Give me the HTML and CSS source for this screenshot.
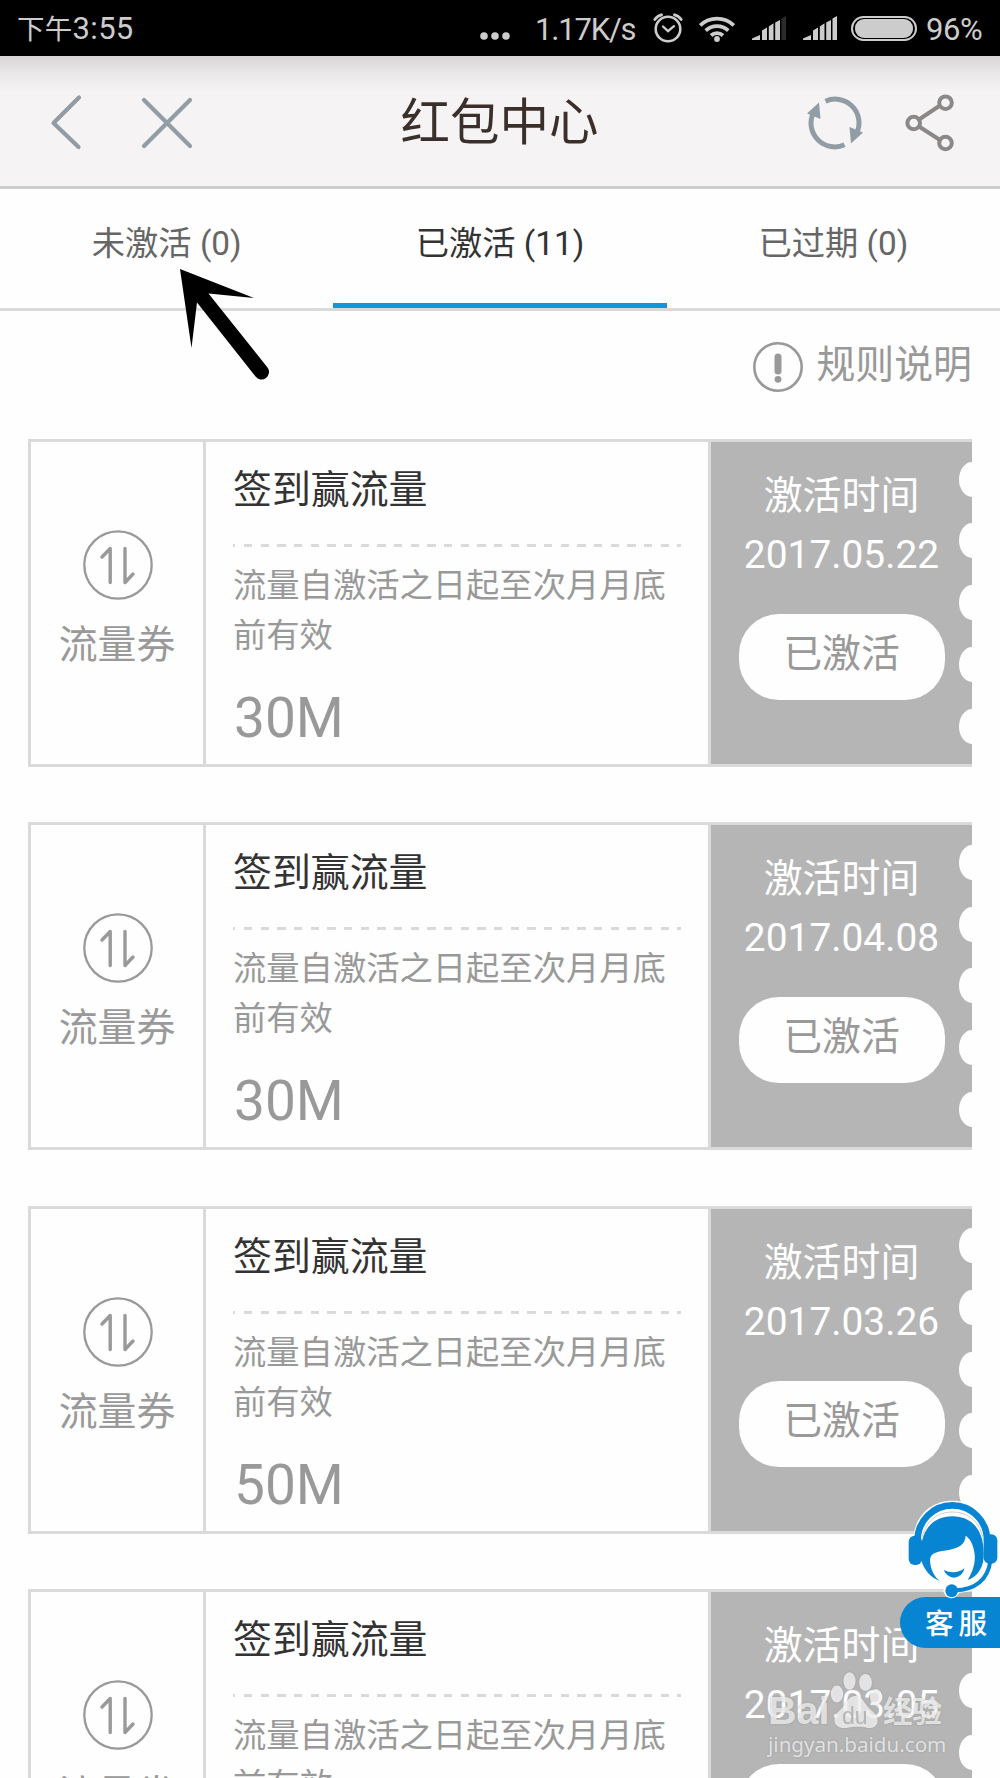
FILE: index.html
```html
<!DOCTYPE html>
<html lang="zh-CN">
<head>
<meta charset="utf-8">
<title>红包中心</title>
<link rel="stylesheet" href="styles.css">
</head>
<body>
<svg class="defs" width="0" height="0" aria-hidden="true">
  <symbol id="flow" viewBox="0 0 70 70">
    <g fill="none" stroke="#999" stroke-linecap="round" stroke-linejoin="round">
      <circle cx="35" cy="35" r="33.7" stroke-width="2.3"/>
      <path d="M19 27 27.2 18.5V52.5M42 18.5V52.5L50 44" stroke-width="3.4"/>
    </g>
  </symbol>
  <symbol id="signal" viewBox="0 0 34 24">
    <path d="M0 24V22.6L8 19v5zM10 24V14.5l5-3V24zM16.800 24V10.500l4.700-3.200V24zM23.200 24V6.500L28 4V24z"/>
  </symbol>
</svg>

<div class="status">
  <div class="clock"><span class="ampm">下午</span>3:55</div>
  <div class="indicators">
    <svg class="dots" width="30" height="24" viewBox="0 0 30 24"><circle cx="4" cy="20" r="3.8"/><circle cx="15" cy="20" r="3.8"/><circle cx="26" cy="20" r="3.8"/></svg>
    <span class="speed">1.17K/s</span>
    <svg class="alarm" width="30" height="30" viewBox="0 0 30 30"><g fill="none" stroke="#ccc" stroke-linecap="round"><circle cx="15" cy="16" r="12.300" stroke-width="2.600"/><path d="m10 13.500 5 4.700 6-5" stroke-width="2.400"/><path d="M1.800 6.500Q4 3 8.500 1.800M28.200 6.500Q26 3 21.500 1.800" stroke-width="2.800"/></g></svg>
    <svg class="wifi" width="36" height="27" viewBox="0 0 36 27"><g fill="none" stroke="#ccc" stroke-width="3.800"><path d="M1.200 10.500a24 24 0 0 1 33.600 0"/><path d="M6.700 15.600a16.500 16.500 0 0 1 22.600 0"/><path d="M12 20.500a9 9 0 0 1 12 0"/></g><circle cx="18" cy="24" r="2.900"/></svg>
    <svg class="sig1" width="34" height="24"><use href="#signal"/><path d="M29.500 24V2.500L34 0V24z" fill="#2c2c2c"/></svg>
    <svg class="sig2" width="34" height="24"><use href="#signal"/><path d="M29.500 24V2.500L34 0V24z"/></svg>
    <div class="battery"><div class="charge"></div></div>
    <span class="percent">96%</span>
  </div>
</div>

<header class="bar">
  <div class="side">
    <svg width="34" height="58" viewBox="0 0 34 58"><path d="M30 3.500 4.500 29 29.500 53" fill="none" stroke="#919ca5" stroke-width="4.200" stroke-linecap="round" stroke-linejoin="round"/></svg>
    <svg class="close" width="52" height="52" viewBox="0 0 52 52"><path d="m3 3 46 46M49 3 3 49" fill="none" stroke="#919ca5" stroke-width="4.200" stroke-linecap="round"/></svg>
  </div>
  <h1>红包中心</h1>
  <div class="side right">
    <svg width="56" height="54" viewBox="-28 -27 56 54"><g id="half"><path d="M-9.500-21.800A23.800 23.800 0 0 1 22.600 8" fill="none" stroke="#919ca5" stroke-width="5"/><path d="M14.500 4 28 9.500 16 20.500z" fill="#919ca5"/></g><use href="#half" transform="rotate(180)"/></svg>
    <svg class="share" width="50" height="60" viewBox="0 0 50 60"><g fill="none" stroke="#8b8887" stroke-width="4"><path d="M14 26.500 35 12.500M14 33.500l21 13.500"/><circle cx="8.700" cy="30" r="6.300"/><circle cx="40.500" cy="9.700" r="6.300"/><circle cx="40.500" cy="50" r="6.300"/></g></svg>
  </div>
</header>

<nav class="tabs">
  <div class="tab">未激活 (0)</div>
  <div class="tab active">已激活 (11)</div>
  <div class="tab">已过期 (0)</div>
</nav>

<div class="rules">
  <svg width="50" height="50" viewBox="0 0 50 50"><circle cx="25" cy="25" r="23.700" fill="none" stroke="#999" stroke-width="2.600"/><path d="M25 15v14" stroke="#999" stroke-width="7" stroke-linecap="round"/><circle cx="25" cy="37.300" r="3.400" fill="#999"/></svg>
  <span>规则说明</span>
</div>

<main class="list">
  <article class="card">
    <div class="kind"><svg width="70" height="70"><use href="#flow"/></svg><span>流量券</span></div>
    <div class="info"><h2>签到赢流量</h2><div class="dash"></div><p>流量自激活之日起至次月月底前有效</p><strong>30M</strong></div>
    <div class="stub"><span>激活时间</span><span>2017.05.22</span><div class="pill">已激活</div><div class="teeth"><i></i><i></i><i></i><i></i><i></i></div></div>
  </article>
  <article class="card">
    <div class="kind"><svg width="70" height="70"><use href="#flow"/></svg><span>流量券</span></div>
    <div class="info"><h2>签到赢流量</h2><div class="dash"></div><p>流量自激活之日起至次月月底前有效</p><strong>30M</strong></div>
    <div class="stub"><span>激活时间</span><span>2017.04.08</span><div class="pill">已激活</div><div class="teeth"><i></i><i></i><i></i><i></i><i></i></div></div>
  </article>
  <article class="card">
    <div class="kind"><svg width="70" height="70"><use href="#flow"/></svg><span>流量券</span></div>
    <div class="info"><h2>签到赢流量</h2><div class="dash"></div><p>流量自激活之日起至次月月底前有效</p><strong>50M</strong></div>
    <div class="stub"><span>激活时间</span><span>2017.03.26</span><div class="pill">已激活</div><div class="teeth"><i></i><i></i><i></i><i></i><i></i></div></div>
  </article>
  <article class="card">
    <div class="kind"><svg width="70" height="70"><use href="#flow"/></svg><span>流量券</span></div>
    <div class="info"><h2>签到赢流量</h2><div class="dash"></div><p>流量自激活之日起至次月月底前有效</p></div>
    <div class="stub"><span>激活时间</span><span>2017.03.05</span><div class="pill"></div><div class="teeth"><i></i><i></i><i></i><i></i><i></i></div></div>
  </article>
</main>

<svg class="pointer" width="92" height="112" viewBox="0 0 92 112"><path d="M1 0 75 29 29.500 24.500 88.500 98.500A7 7 0 0 1 76.500 107.500L18 33.500 12.500 79z"/></svg>

<div class="service">
  <svg width="95" height="100" viewBox="615 55 285 300">
    <path d="M757 60C820 60 862 103 869 158Q897 162 896 200 897 245 880 252C868 300 830 335 778 336Q768 354 752 353 732 348 730 330 734 308 748 306 700 305 664 254 622 258 622 220V190Q622 165 641 160C650 103 695 60 757 60z" fill="#fff"/>
    <path d="M667 168C680 120 712 94 757 94S836 120 848 168" fill="none" stroke="#ccc" stroke-width="3"/>
    <path d="M653 178A104 104 0 0 1 861 178" fill="none" stroke="#0785d3" stroke-width="20"/>
    <path d="M664 240C655 160 690 107 757 107S858 160 850 240C845 265 830 290 803 298 820 270 828 240 823 215 820 190 808 172 797 165 795 190 780 200 750 207 715 213 690 213 690 240 692 270 705 290 719 300 690 290 672 265 664 240z" fill="#0785d3"/>
    <path d="M858 235C855 285 820 316 775 320" fill="none" stroke="#fff" stroke-width="13"/>
    <path d="M871 240C864 297 825 328 765 329" fill="none" stroke="#0785d3" stroke-width="12"/>
    <rect x="626" y="165" width="40" height="88" rx="18" fill="#0785d3"/><rect x="851" y="161" width="41" height="88" rx="18" fill="#0785d3"/>
    <circle cx="755" cy="330" r="19" fill="#0785d3"/>
    <path d="M731 268Q765 284 794 263 786 290 762 291 740 289 731 268z" fill="#0785d3"/>
  </svg>
  <div class="label">客服</div>
</div>

<div class="watermark">
  <div class="brand">
    <span class="bai">Bai</span>
    <div class="paw"><svg width="54" height="58" viewBox="0 0 54 58"><ellipse cx="9" cy="22" rx="6.200" ry="8.500"/><ellipse cx="21.500" cy="9" rx="6" ry="8.700"/><ellipse cx="37.500" cy="10.500" rx="6.400" ry="8.500"/><ellipse cx="48" cy="25" rx="6" ry="8"/><path d="M27 24C35 24 36 32 43 38 54 47 50 57 40 56 32 54 24 55 18 56 7 57 3 48 10 40 18 34 19 24 27 24z"/></svg><b>du</b></div>
    <span class="jy">经验</span>
  </div>
  <div class="url">jingyan.baidu.com</div>
</div>
</body>
</html>
```

FILE: styles.css
```css
* { box-sizing: border-box; }

html { overflow: hidden; }

body {
  position: relative;
  width: 1000px;
  height: 1778px;
  margin: 0;
  overflow: hidden;
  background: #fefefe;
  color: #999;
  font-family: Roboto, "Noto Sans CJK SC", sans-serif;
  font-size: 38.9px;
}

svg { display: block; flex: none; }
.defs { position: absolute; }

/* status bar */
.status {
  display: flex;
  justify-content: space-between;
  align-items: center;
  height: 56px;
  padding: 0 17px;
  background: #000;
  color: #ccc;
  fill: #ccc;
  font-size: 31px;
  line-height: 56px;
}
.ampm { font-size: 27.500px; }
.clock { letter-spacing: 0.3px; padding-top: 3px; }
.indicators { display: flex; align-items: center; }
.speed { width: 100px; margin: 3px 18px 0 25px; letter-spacing: -1.200px; white-space: nowrap; }
.alarm { margin-right: 16px; margin-bottom: 1px; }
.wifi { margin-right: 17px; }
.sig1 { margin-right: 17px; }
.sig2 { margin-right: 14px; }
.battery { width: 66px; height: 25px; padding: 1px 2px; border: 2px solid #ccc; border-radius: 13px; }
.charge { height: 19px; border-radius: 9px; background: #ccc; }
.percent { width: 57px; margin: 3px 0 0 9px; letter-spacing: -0.400px; white-space: nowrap; }

/* title bar */
.bar {
  display: flex;
  justify-content: space-between;
  align-items: center;
  height: 133px;
  padding: 4px 45px 0 49px;
  border-bottom: 3px solid #ccc;
  background: linear-gradient(#d6d4d5, #e9e7e8 16px, #f5f3f4 36px);
}
.side { display: flex; align-items: center; width: 200px; }
.close { margin-left: 58px; }
.right { justify-content: flex-end; }
.share { margin-left: 42px; }
.bar h1 { margin: 0 5px 0 0; color: #3a2f2a; font-size: 49.500px; font-weight: 400; line-height: 70px; }

/* tabs */
.tabs { display: flex; height: 122px; border-bottom: 3px solid #dadada; }
.tab { flex: 1; padding-top: 30px; color: #666; font-size: 33.300px; line-height: 50px; text-align: center; }
.active { border-bottom: 5px solid #1296db; color: #333; }

.rules { display: flex; justify-content: flex-end; align-items: center; height: 111px; padding: 0 28px; gap: 13px; }
.rules span { line-height: 60px; margin-bottom: 4px; }

/* coupons */
.list { display: flex; flex-direction: column; gap: 55.330px; margin-top: 17px; padding-left: 28px; }
.card { display: flex; flex: none; width: 944px; height: 328px; border: 3px solid #dadada; border-right: 0; }
.kind { display: flex; flex-direction: column; align-items: center; width: 175px; padding-top: 88px; border-right: 3px solid #dadada; }
.kind svg { margin-left: 2px; }
.kind span { margin-top: 15px; line-height: 60px; }
.info { width: 505px; padding: 18px 27px 0 27px; border-right: 3px solid #dadada; }
.info h2 { margin: 0; color: #333; font-size: 38.900px; font-weight: 400; line-height: 60px; }
.dash {
  height: 3px;
  margin-top: 24px;
  background: repeating-linear-gradient(90deg, #dadada 0 2.500px, transparent 2.500px 11px, #dadada 11px 16.670px);
}
.info p { width: 440px; margin: 14px 0 27px; font-size: 33.300px; line-height: 50px; }
.info strong { display: block; margin-left: 1px; font-size: 55px; font-weight: 400; line-height: 60px; }

.stub { position: relative; display: flex; flex-direction: column; align-items: center; width: 261px; padding-top: 24px; background: #b5b5b5; color: #fff; }
.stub span { line-height: 59px; }
.pill { width: 206px; height: 86px; margin-top: 30px; border-radius: 40px; background: #fefefe; color: #999; line-height: 80px; text-align: center; }
.teeth { position: absolute; top: 19.500px; right: 0; display: flex; flex-direction: column; gap: 26.750px; }
.teeth i { width: 13px; height: 35px; border-radius: 13px 0 0 13px / 17.500px 0 0 17.500px; background: #fefefe; }

/* overlays */
.pointer { position: absolute; left: 179px; top: 269px; }

.service { position: absolute; right: 0; top: 1499px; width: 100px; }
.service svg { margin-left: 5px; }
.label { height: 51px; margin-top: -2px; padding-left: 25px; border-radius: 26px 0 0 26px; background: #0785d3; color: #fff; font-size: 28.500px; font-weight: 500; line-height: 56px; letter-spacing: 5px; white-space: nowrap; }

.watermark { position: absolute; left: 768px; top: 1672px; width: 190px; color: rgba(255, 255, 255, .7); text-shadow: 0 0 2px rgba(130, 130, 130, .6); }
.brand { display: flex; align-items: flex-end; height: 58px; font-weight: 700; }
.bai { width: 63px; font-family: "Liberation Sans", sans-serif; font-size: 39.500px; line-height: 40px; }
.paw { position: relative; width: 52px; fill: rgba(255, 255, 255, .7); filter: drop-shadow(0 0 1px rgba(130, 130, 130, .6)); }
.paw svg { margin-left: -3px; }
.paw b { position: absolute; left: 11px; bottom: 2px; color: #b5b5b5; font-family: "Liberation Sans", sans-serif; font-size: 23px; font-weight: 400; line-height: 24px; text-shadow: none; }
.jy { font-size: 29.500px; line-height: 36px; white-space: nowrap; }
.url { font-family: "Noto Sans", sans-serif; font-size: 20.600px; line-height: 28px; white-space: nowrap; }
```
